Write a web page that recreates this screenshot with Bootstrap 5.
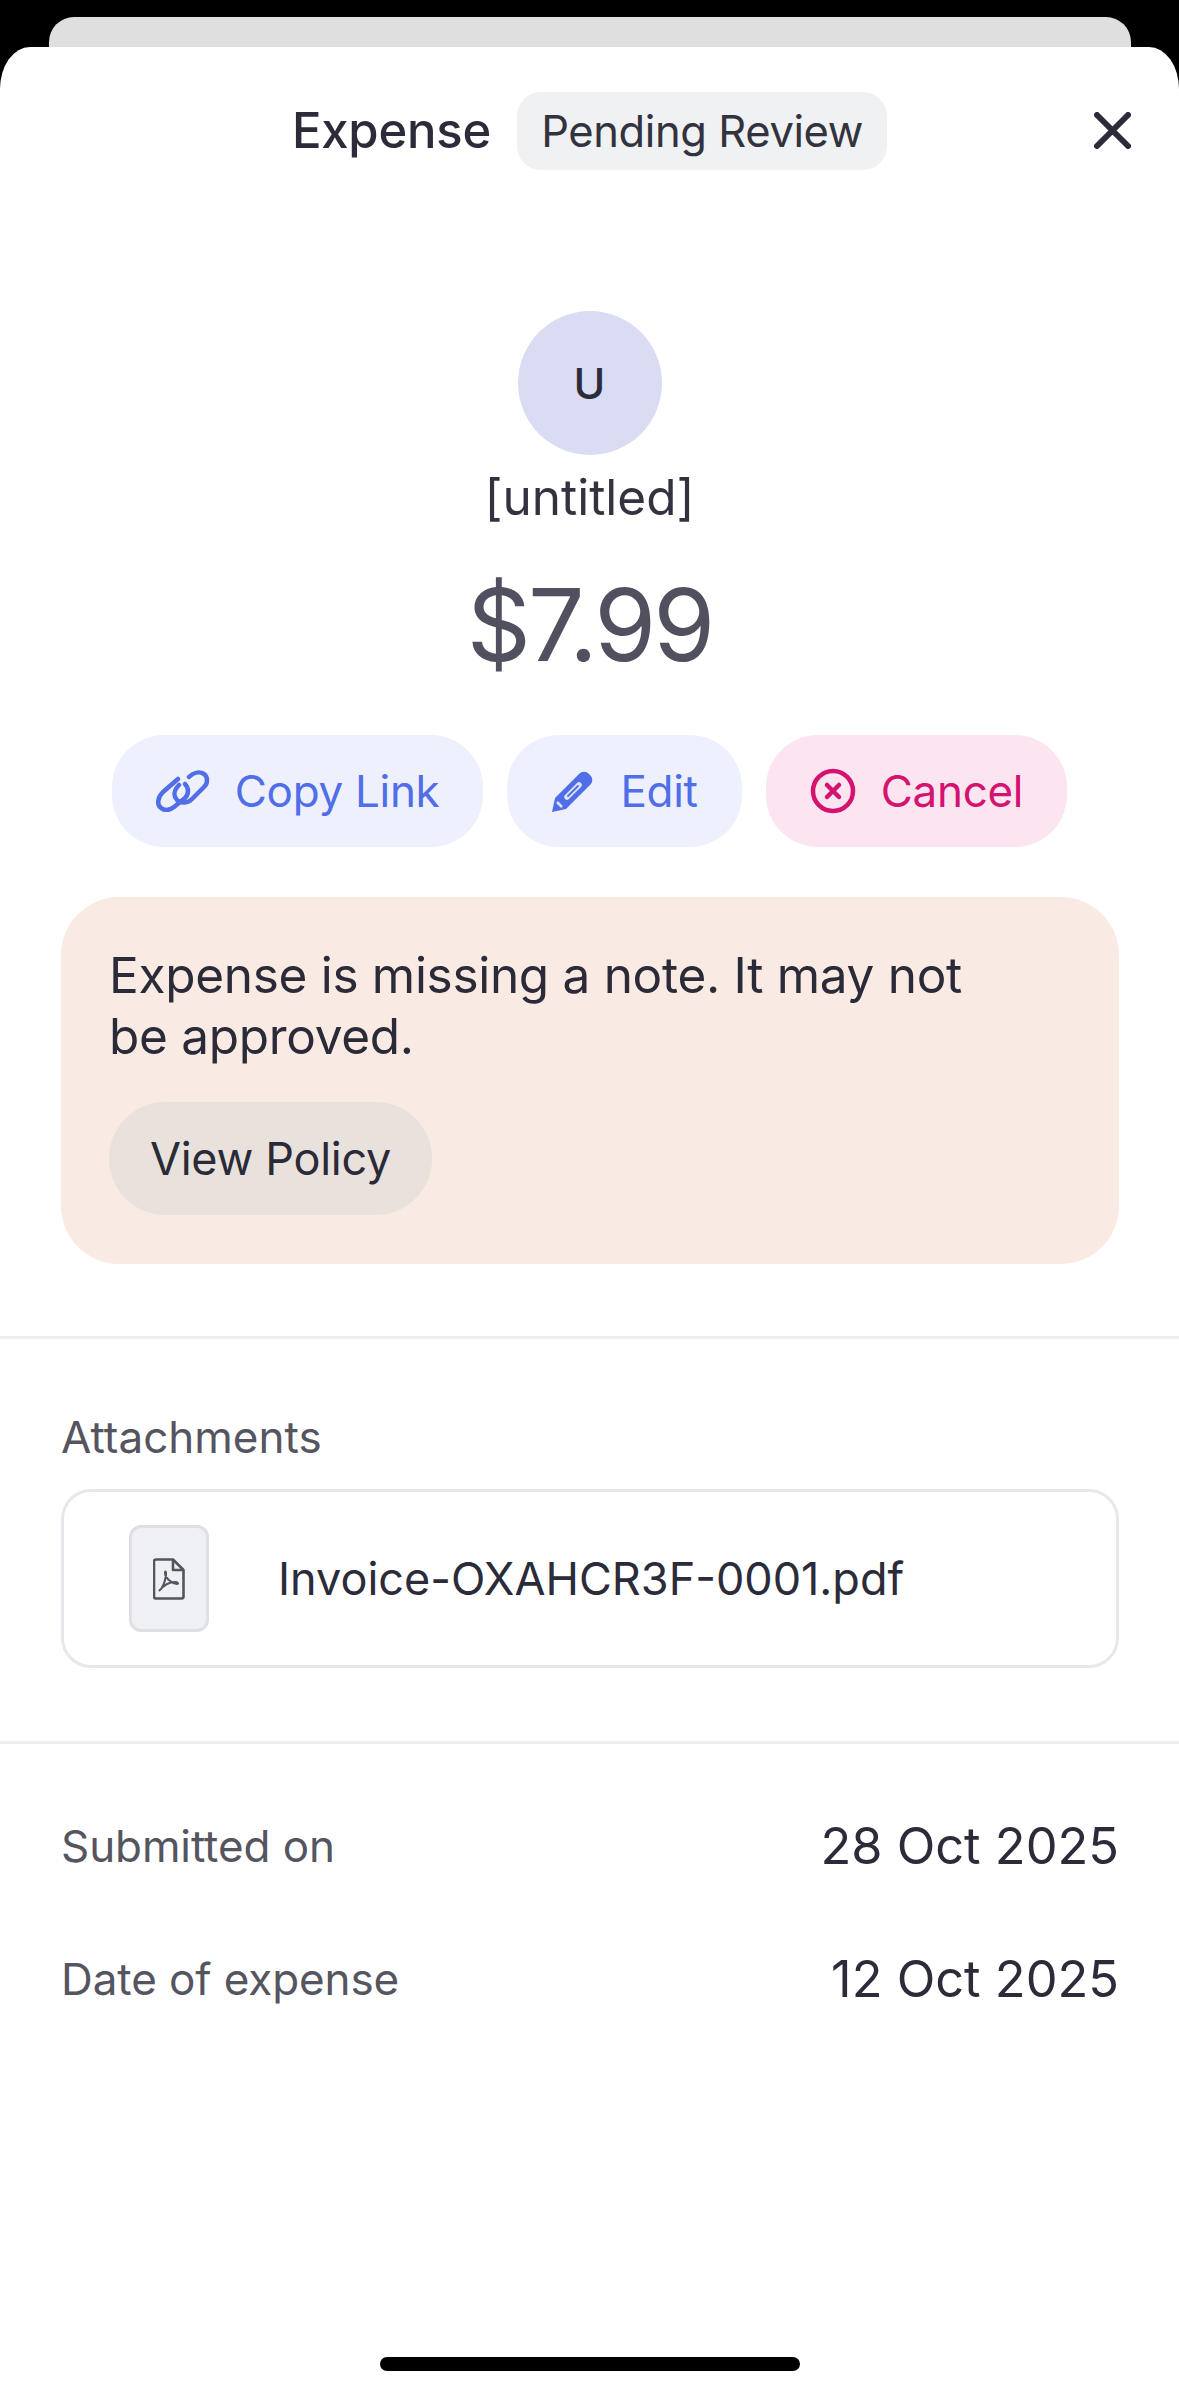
<!DOCTYPE html>
<html lang="en">
<head>
<meta charset="utf-8">
<title>Expense</title>
<link href="https://cdn.jsdelivr.net/npm/bootstrap@5.3.0/dist/css/bootstrap.min.css" rel="stylesheet">
<style>
html,body{height:100%;}
body{background:#000;font-family:"Inter","Noto Sans",sans-serif;color:#2b2b3a;width:1179px;height:2396px;overflow:hidden;padding-top:17px;}
.back-sheet{height:30px;margin:0 48px 0 49px;background:#dfdfdf;border-radius:25px 25px 0 0;}
.front-sheet{height:2349px;background:#fff;border-radius:30px 30px 0 0/42px 42px 0 0;}
.top-bar{height:123px;padding-top:45px;}
.top-title{font-size:49px;font-weight:500;letter-spacing:-.2px;line-height:78px;}
.status-pill{height:78px;width:370px;margin-left:26px;background:#f0f1f3;border-radius:24px;font-size:43.500px;line-height:78px;color:#33333f;text-align:center;letter-spacing:-.4px;}
.close-x{right:48px;top:65px;width:37px;height:37px;}
.avatar-disc{width:144px;height:144px;background:#d9dcf2;font-size:43px;font-weight:500;margin-top:141px;}
.who-name{font-size:49.500px;line-height:56px;margin-top:14px;color:#33333f;}
.amount-big{font-size:100px;line-height:120px;color:#50505f;margin-top:40px;letter-spacing:-3px;}
.act-row{gap:24px;margin-top:50px;}
.act-btn{height:112px;border-radius:52px;font-size:44px;border:0;padding:0 44px;gap:25px;letter-spacing:-.3px;}
.act-blue{background:#eef0fd;color:#4f6ee8;}
.act-pink{background:#fce5f0;color:#d4126f;}
.note-box{margin:50px 60px 0 61px;height:367px;background:#f9ebe3;border-radius:58px;padding:48px;}
.note-text{font-size:49.500px;line-height:61px;letter-spacing:-.3px;color:#2a2a38;width:880px;}
.note-btn{height:113px;width:323px;margin-top:35px;background:#e9e1db;border-radius:56px;font-size:45px;color:#2a2a38;border:0;letter-spacing:-.3px;}
.rule-line{height:3px;background:#eeeef1;}
.rule-a{margin-top:72px;}
.rule-b{margin-top:73px;}
.section-lab{font-size:44px;line-height:50px;color:#55555f;padding:0 61px;margin-top:73px;}
.file-card{margin:27px 60px 0 61px;height:179px;border:3px solid #e8e8ec;border-radius:30px;padding-left:65px;}
.file-thumb{width:80px;height:107px;background:#eff0f3;border:3px solid #dfdfe5;border-radius:12px;}
.file-name{font-size:45px;margin-left:69px;color:#2b2b3a;}
.info-row{padding:0 60px 0 61px;height:60px;}
.info-a{margin-top:72px;}
.info-b{margin-top:73px;}
.info-lab{font-size:44px;letter-spacing:-.1px;color:#55555f;}
.info-val{font-size:50.500px;color:#2b2b3a;}
.home-bar{width:420px;height:14px;background:#000;border-radius:7px;margin:0 auto 25px;}
</style>
</head>
<body>
<div class="back-sheet"></div>
<div class="front-sheet d-flex flex-column position-relative">
  <div class="top-bar d-flex justify-content-center">
    <div class="top-title">Expense</div>
    <div class="status-pill">Pending Review</div>
    <svg class="close-x position-absolute" viewBox="0 0 37 37" fill="none" stroke="#2b2b3a" stroke-width="6" stroke-linecap="round"><path d="M3 3 34 34M34 3 3 34"/></svg>
  </div>
  <div class="d-flex flex-column align-items-center">
    <div class="avatar-disc rounded-circle d-flex align-items-center justify-content-center">U</div>
    <div class="who-name">[untitled]</div>
    <div class="amount-big">$7.99</div>
    <div class="act-row d-flex justify-content-center">
      <button class="act-btn act-blue d-flex align-items-center" type="button">
        <svg width="54" height="42" viewBox="0 0 54 42" fill="none" stroke="#4f6ee8" stroke-width="4.500" stroke-linecap="round"><path d="M22 9 7 22C1 28 1 35 5 38 9 41 14 40 18 37L29 28C33 24 33 18 29 14"/><path d="M33 7C37 3 43 1 48 4 52 7 52 13 48 17L36 29C32 33 25 34 21 30 17 26 18 20 23 15"/></svg>
        Copy Link
      </button>
      <button class="act-btn act-blue d-flex align-items-center" type="button">
        <svg width="44" height="44" viewBox="0 0 44 44"><path d="M1 43 4 29 28 5C31 2 35 2 38 5L39 6C42 9 42 13 39 16L15 40Z" fill="#4f6ee8"/><path d="M16 28 28 16" stroke="#dfe4fb" stroke-width="5.500" stroke-linecap="round"/><path d="M17 27 27 17" stroke="#4f6ee8" stroke-width="1.800" stroke-linecap="round"/><path d="M6 33 11 38" stroke="#dfe4fb" stroke-width="2.500"/></svg>
        Edit
      </button>
      <button class="act-btn act-pink d-flex align-items-center" type="button">
        <svg width="46" height="46" viewBox="0 0 46 46" fill="none" stroke="#d4126f" stroke-width="4.500"><circle cx="23" cy="23" r="20"/><path d="M17 17 29 29M29 17 17 29" stroke-linecap="round"/></svg>
        Cancel
      </button>
    </div>
  </div>
  <div class="note-box">
    <div class="note-text">Expense is missing a note. It may not be approved.</div>
    <button class="note-btn d-flex align-items-center justify-content-center" type="button">View Policy</button>
  </div>
  <div class="rule-line rule-a"></div>
  <div class="section-lab">Attachments</div>
  <div class="file-card d-flex align-items-center">
    <div class="file-thumb d-flex align-items-center justify-content-center">
      <svg width="32" height="42" viewBox="0 0 32 42" fill="none" stroke="#55555f" stroke-width="2.600" stroke-linejoin="round"><path d="M3 1.500H20L30.500 12V38.500C30.500 39.600 29.600 40.500 28.500 40.500H3C1.900 40.500 1 39.600 1 38.500V3.500C1 2.400 1.900 1.500 3 1.500Z"/><path d="M20 1.500V12H30.500"/><path d="M6 33C10 30 12 24 13 17 13.500 14 12 12 12 15 12 20 18 25 24 26 26 26 25 24 22 24 17 24 10 27 6 33" stroke-width="2"/></svg>
    </div>
    <div class="file-name">Invoice-OXAHCR3F-0001.pdf</div>
  </div>
  <div class="rule-line rule-b"></div>
  <div class="info-row info-a d-flex justify-content-between align-items-center">
    <div class="info-lab">Submitted on</div>
    <div class="info-val">28 Oct 2025</div>
  </div>
  <div class="info-row info-b d-flex justify-content-between align-items-center">
    <div class="info-lab">Date of expense</div>
    <div class="info-val">12 Oct 2025</div>
  </div>
  <div class="home-bar mt-auto"></div>
</div>
<script src="https://cdn.jsdelivr.net/npm/bootstrap@5.3.0/dist/js/bootstrap.bundle.min.js"></script>
</body>
</html>
